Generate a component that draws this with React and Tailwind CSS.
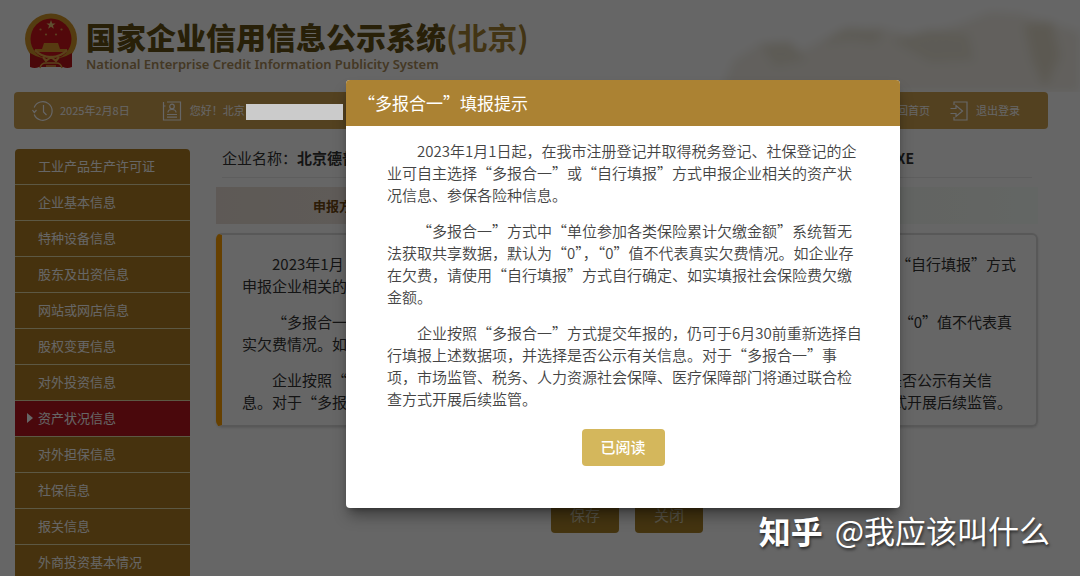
import React from 'react';

const menuItems = [
    '工业产品生产许可证',
    '企业基本信息',
    '特种设备信息',
    '股东及出资信息',
    '网站或网店信息',
    '股权变更信息',
    '对外投资信息',
    '资产状况信息',
    '对外担保信息',
    '社保信息',
    '报关信息',
    '外商投资基本情况',
];

const ACTIVE_ITEM = '资产状况信息';

const Emblem = () => (
    <svg viewBox="0 0 52 56" className="h-14 w-[52px] shrink-0" aria-hidden="true">
        <ellipse cx="26" cy="26" rx="26" ry="25.5" fill="#d2962a" />
        <circle cx="26" cy="26" r="20.5" fill="#cd161c" />
        <path d="M26 7 L27.2 10.4 L30.6 10.4 L27.9 12.4 L28.9 15.8 L26 13.8 L23.1 15.8 L24.1 12.4 L21.4 10.4 L24.8 10.4 Z" fill="#ebc878" />
        <g fill="#e0a050">
            <circle cx="15.5" cy="16.5" r="1.1" />
            <circle cx="36.5" cy="16.5" r="1.1" />
            <circle cx="21" cy="21.5" r="1.1" />
            <circle cx="31" cy="21.5" r="1.1" />
        </g>
        <path d="M19 30 L33 30 L34 33 L35 36 L42 36 L42 39 L10 39 L10 36 L17 36 L18 33 Z" fill="#d9942c" />
        <path d="M5 40 Q15 46 26 46 Q37 46 47 40 L47 54 Q42 56 38 54 L14 54 Q10 56 5 54 Z" fill="#b91419" />
        <path d="M10 37 Q16 44 26 44 Q36 44 42 37" fill="none" stroke="#e0a545" strokeWidth="2" />
        <path d="M18 44 L21 48 L26 44 L31 48 L34 44" fill="none" stroke="#e0a545" strokeWidth="2.2" />
        <path d="M15 55 Q16 50 21 50 L31 50 Q36 50 37 55 M21 53 L31 53" fill="none" stroke="#e0a545" strokeWidth="1.6" />
    </svg>
);

const Mountains = () => (
    <svg viewBox="0 0 380 92" className="h-[92px] w-[380px]" aria-hidden="true">
        <defs>
            <filter id="mist" x="-10%" y="-10%" width="120%" height="120%">
                <feGaussianBlur stdDeviation="5" />
            </filter>
        </defs>
        <g filter="url(#mist)">
            <path d="M20 92 L34 60 L60 44 L105 50 L140 30 L180 28 L215 36 L255 26 L290 12 L320 14 L380 32 L380 92 Z" fill="#f4f0e8" />
            <path d="M60 44 L90 42 L106 60 L75 66 Z M122 44 L146 28 L184 30 L176 44 L150 40 Z M192 40 L230 30 L268 34 L274 60 L230 62 Z" fill="#e9e4d6" />
            <path d="M324 24 L352 22 L360 56 L345 88 L332 60 Z" fill="#e6dfce" />
        </g>
    </svg>
);

const ClockIcon = () => (
    <svg viewBox="0 0 22 22" className="size-[22px]" fill="none" stroke="currentColor" strokeWidth="1.2" aria-hidden="true">
        <path d="M2.2 7.5 A9.3 9.3 0 1 1 2.2 14.5" />
        <path d="M0.5 10 L2.3 12.5 L4.5 10" />
        <path d="M11.5 5 L11.5 12 L14.5 15" />
    </svg>
);

const UserIcon = () => (
    <svg viewBox="0 0 20 20" className="size-5" fill="none" stroke="currentColor" strokeWidth="1.2" aria-hidden="true">
        <path d="M5 1 H18.5 V19 H1.5 V1 M1.5 5 H3.5" />
        <circle cx="10" cy="5.5" r="2.3" />
        <path d="M6 11.5 Q6 8.5 10 8.5 Q14 8.5 14 11.5 M5 13.5 H15 M5 16.2 H15" />
    </svg>
);

const ExitIcon = () => (
    <svg viewBox="0 0 18 20" className="h-5 w-[18px]" fill="none" stroke="currentColor" strokeWidth="1.2" aria-hidden="true">
        <path d="M4 4 V1 H17 V19 H4 V16" />
        <path d="M0.5 7.5 H6 V4.5 L12.5 10 L6 15.5 V12.5 H0.5" />
    </svg>
);

const Header = () => (
    <header className="relative h-[92px]">
        <div className="absolute right-0 top-0">
            <Mountains />
        </div>
        <div className="relative flex gap-[9px] pl-[25px] pt-[13px]">
            <Emblem />
            <div className="pt-[5px]">
                <h1 className="text-[30px] font-black leading-9 text-[#645014]">
                    国家企业信用信息公示系统<span className="font-bold text-[#a58232]">(北京)</span>
                </h1>
                <p className="font-['Noto_Sans',sans-serif] text-[13px] font-semibold leading-5 text-[#aa8c5a]">
                    National Enterprise Credit Information Publicity System
                </p>
            </div>
        </div>
    </header>
);

const TopBar = () => (
    <nav className="ml-3.5 mr-8 flex h-[37px] items-center rounded-sm bg-[#d0a252] pl-[18px] pr-7 text-[11px] text-white">
        <ClockIcon />
        <span className="ml-1.5">2025年2月8日</span>
        <span className="ml-8">
            <UserIcon />
        </span>
        <span className="ml-2">您好！北京</span>
        <a href="#home" className="ml-auto">回首页</a>
        <a href="#logout" className="ml-5 flex items-center gap-2">
            <ExitIcon />
            退出登录
        </a>
    </nav>
);

const Sidebar = () => (
    <aside className="w-[175px] shrink-0 overflow-hidden rounded-t-sm">
        <ul>
            {menuItems.map((item) => (
                <li key={item} className="border-b border-[#e6dcaa]">
                    <a
                        href="#menu"
                        className={`flex h-[35px] items-center pb-0.5 pl-3 text-[13px] text-white ${
                            item === ACTIVE_ITEM ? 'bg-[#b9141e]' : 'bg-[#af7d23]'
                        }`}
                    >
                        <span className="w-[11px]">
                            {item === ACTIVE_ITEM && (
                                <svg viewBox="0 0 6 10" className="h-2.5 w-1.5" fill="currentColor" aria-hidden="true">
                                    <path d="M0 0 L6 5 L0 10 Z" />
                                </svg>
                            )}
                        </span>
                        {item}
                    </a>
                </li>
            ))}
        </ul>
    </aside>
);

const Notice = () => (
    <section className="mt-[9px] space-y-3.5 whitespace-nowrap rounded-md border-2 border-l-6 border-[#dcdcdc] border-l-[#ffa000] pb-3 pl-5 pt-[18px] text-[15px] leading-[22px] text-[#333] shadow">
        <div>
            <p className="flex justify-between pl-[30px] pr-5">
                <span>2023年1月</span>
                <span>“自行填报”方式</span>
            </p>
            <p>申报企业相关的</p>
        </div>
        <div>
            <p className="flex justify-between pl-[30px] pr-6">
                <span>“多报合一</span>
                <span>，“0”值不代表真</span>
            </p>
            <p>实欠费情况。如</p>
        </div>
        <div>
            <p className="flex justify-between pl-[30px] pr-11">
                <span>企业按照“</span>
                <span>是否公示有关信</span>
            </p>
            <p className="flex justify-between pr-6">
                <span>息。对于“多报</span>
                <span>式开展后续监管。</span>
            </p>
        </div>
    </section>
);

const Content = () => (
    <main className="min-w-0 flex-1">
        <div className="mx-1.5 flex h-[29px] justify-between border-b border-[#ebebeb] text-[15px] leading-[18px] text-[#333]">
            <p>
                企业名称：<strong>北京德普</strong>
            </p>
            <strong className="pr-[118px] text-sm leading-[18px]">XE</strong>
        </div>
        <div className="mt-[9px] flex h-[37px] items-center bg-linear-to-r from-[#ebdfd6] to-[#f8fffa] pl-[97px] text-[13px] font-bold text-[#6e460f]">
            申报方
        </div>
        <Notice />
        <div className="mt-[70px] flex justify-center gap-4">
            <button type="button" className="h-9 w-[68px] rounded-sm bg-[#aa8228] text-[15px] text-[#dcd2b4]">保存</button>
            <button type="button" className="h-9 w-[68px] rounded-sm bg-[#aa8228] text-[15px] text-[#dcd2b4]">关闭</button>
        </div>
    </main>
);

const ReportDialog = () => (
    <div className="absolute inset-0 bg-black/60 pl-[346px] pr-[180px] pt-20">
        <div role="dialog" aria-modal="true" aria-labelledby="dialog-title" className="overflow-hidden rounded-sm bg-white shadow-lg shadow-black/40">
            <h2 id="dialog-title" className="bg-[#ab8233] pl-3 text-[17px] leading-[46px] text-white">
                “多报合一”填报提示
            </h2>
            <div className="space-y-3.5 whitespace-nowrap pl-[41px] pt-3.5 text-[15px] font-[350] leading-[22px] text-[#444]">
                <p className="indent-[30px]">
                    2023年1月1日起，在我市注册登记并取得税务登记、社保登记的企
                    <br />
                    业可自主选择“多报合一”或“自行填报”方式申报企业相关的资产状
                    <br />
                    况信息、参保各险种信息。
                </p>
                <p className="indent-[30px]">
                    “多报合一”方式中“单位参加各类保险累计欠缴金额”系统暂无
                    <br />
                    法获取共享数据，默认为“0”，“0”值不代表真实欠费情况。如企业存
                    <br />
                    在欠费，请使用“自行填报”方式自行确定、如实填报社会保险费欠缴
                    <br />
                    金额。
                </p>
                <p className="indent-[30px]">
                    企业按照“多报合一”方式提交年报的，仍可于6月30前重新选择自
                    <br />
                    行填报上述数据项，并选择是否公示有关信息。对于“多报合一”事
                    <br />
                    项，市场监管、税务、人力资源社会保障、医疗保障部门将通过联合检
                    <br />
                    查方式开展后续监管。
                </p>
            </div>
            <div className="flex justify-center pb-[42px] pt-[19px]">
                <button type="button" className="h-[37px] w-[83px] rounded bg-[#d4b75c] text-[15px] font-medium text-white">
                    已阅读
                </button>
            </div>
        </div>
    </div>
);

const App = () => (
    <div lang="zh-CN" className="relative h-screen overflow-hidden bg-white font-['Noto_Sans_CJK_SC',sans-serif]">
        <Header />
        <TopBar />
        <div className="flex gap-[26px] pl-[15px] pr-[42px] pt-5">
            <Sidebar />
            <Content />
        </div>
        <ReportDialog />
        <div className="absolute left-[246px] top-[104px] h-4 w-[97px] bg-[#cbcbcb]" />
        <p className="absolute bottom-6 right-[30px] flex items-center gap-3 text-[31px] leading-[44px] text-white [text-shadow:1px_2px_3px_rgba(0,0,0,0.6)]">
            <span className="text-[32px] font-bold">知乎</span>
            <span>@我应该叫什么</span>
        </p>
    </div>
);

export default App;
